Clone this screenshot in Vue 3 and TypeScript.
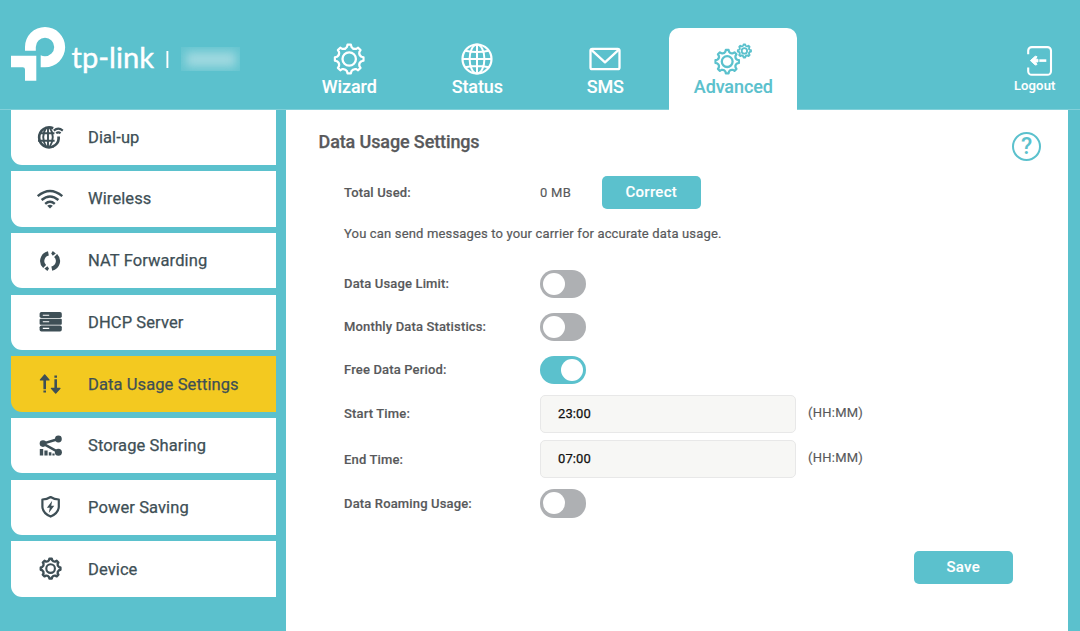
<script setup lang="ts">
import { ref } from 'vue'

interface NavTab { id: string; label: string }
interface MenuItem { id: string; label: string }

const tabs: NavTab[] = [
  { id: 'wizard', label: 'Wizard' },
  { id: 'status', label: 'Status' },
  { id: 'sms', label: 'SMS' },
  { id: 'advanced', label: 'Advanced' },
]
const activeTab = ref('advanced')

const menu: MenuItem[] = [
  { id: 'dial', label: 'Dial-up' },
  { id: 'wireless', label: 'Wireless' },
  { id: 'nat', label: 'NAT Forwarding' },
  { id: 'dhcp', label: 'DHCP Server' },
  { id: 'usage', label: 'Data Usage Settings' },
  { id: 'storage', label: 'Storage Sharing' },
  { id: 'power', label: 'Power Saving' },
  { id: 'device', label: 'Device' },
]
const activeItem = ref('usage')

const limit = ref(false)
const monthly = ref(false)
const freePeriod = ref(true)
const roaming = ref(false)
const startTime = ref('23:00')
const endTime = ref('07:00')

// Outline of an eight-toothed gear with scooped valleys between the teeth.
function gear(cx: number, cy: number, outer: number, root: number): string {
  const at = (r: number, a: number) =>
    `${(cx + r * Math.sin(a)).toFixed(2)} ${(cy - r * Math.cos(a)).toFixed(2)}`
  const step = Math.PI / 4
  const shoulder = root + 0.35 * (outer - root)
  let d = ''
  for (let i = 0; i < 8; i++) {
    const a = i * step
    d += `${i ? 'L' : 'M'}${at(outer, a - 0.12)}L${at(outer, a + 0.12)}`
    d += `L${at(shoulder, a + 0.18)}`
    d += `Q${at(root - 0.35 * (outer - root), a + step / 2)} ${at(shoulder, a + step - 0.18)}`
  }
  return d + 'Z'
}
</script>

<template>
  <div class="page">
    <header class="header">
      <div class="brand">
        <svg class="logo" width="170" height="60" viewBox="0 0 170 60">
          <path fill="#fff" d="M14 25.7V22A20 20 0 0 1 34 2A20.15 20.15 0 0 1 34 42.3H29.7V30.2Q31.5 31.2 34 31.2A9.2 9.2 0 1 0 24.8 22V25.7ZM0 30.7H25.3V55.7H14V44.5Q14 42.3 11.8 42.3H0Z" />
          <text class="wordmark" x="60.5" y="42.6" textLength="82.5" lengthAdjust="spacingAndGlyphs">tp-link</text>
          <path d="M156.4 26V43" stroke="#fff" stroke-width="1.9" />
        </svg>
        <div class="model"><i></i></div>
      </div>
      <nav class="tabs">
        <a v-for="t in tabs" :key="t.id" class="tab" :class="{ active: t.id === activeTab }" @click="activeTab = t.id">
          <svg width="40" height="34" viewBox="0 0 40 34" fill="none" stroke="currentColor" stroke-linejoin="round">
            <template v-if="t.id === 'wizard'">
              <path :d="gear(20.2, 17, 14.4, 11.3)" stroke-width="2.2" />
              <circle cx="20.2" cy="17" r="6.7" stroke-width="2.3" />
            </template>
            <g v-else-if="t.id === 'status'" stroke-width="2">
              <circle cx="20" cy="17" r="14.5" stroke-width="2.2" />
              <ellipse cx="20" cy="17" rx="7.4" ry="14.6" />
              <path d="M20 2.4V31.6M5.4 17H34.6M8.3 8.8Q20 11.2 31.7 8.8M8.3 25.2Q20 22.8 31.7 25.2" />
            </g>
            <g v-else-if="t.id === 'sms'" stroke-width="2.3">
              <rect x="5.5" y="6.8" width="29" height="20.4" rx="1.8" />
              <path d="M6.4 7.8L20 20.3L33.6 7.8" />
            </g>
            <template v-else>
              <path :d="gear(14.2, 19.6, 11.8, 9.2)" stroke-width="2.2" />
              <circle cx="14.2" cy="19.6" r="5.4" stroke-width="2.3" />
              <path :d="gear(31.4, 8.9, 6.6, 5.1)" stroke-width="1.9" />
              <circle cx="31.4" cy="8.9" r="2.7" stroke-width="1.8" />
            </template>
          </svg>
          <span>{{ t.label }}</span>
        </a>
      </nav>
      <a class="logout">
        <svg width="26" height="30" viewBox="0 0 26 30" fill="none" stroke="#fff" stroke-width="2.1">
          <path d="M1.2 8.3V4.6A3.6 3.6 0 0 1 4.8 1.1H20.4A3.6 3.6 0 0 1 24 4.6V25.2A3.6 3.6 0 0 1 20.4 28.8H4.8A3.6 3.6 0 0 1 1.2 25.2V21.5" />
          <path d="M12.3 14.6H19.3" stroke-width="2.6" />
          <path d="M3.4 14.6L8.2 10.2L10 10.6L8.6 13.3H11V15.9H8.6L10 18.6L8.2 19Z" fill="#fff" stroke-width="0.9" stroke-linejoin="round" />
        </svg>
        <span>Logout</span>
      </a>
    </header>

    <div class="body">
      <aside class="sidebar">
        <a v-for="m in menu" :key="m.id" class="item" :class="{ active: m.id === activeItem }" @click="activeItem = m.id">
          <svg width="30" height="28" viewBox="0 0 30 28" fill="none" stroke="currentColor">
            <g v-if="m.id === 'dial'" stroke-width="1.9">
              <path d="M17.2 5.2A10 10 0 1 0 17.4 23.4" stroke-width="2.6" />
              <path d="M12 4.2V24M3 10.2H18.4M2 17.8H18.6M10.4 4.2Q4 14 10.4 24M13.6 4.2Q20 14 13.6 24" />
              <path d="M22.6 13.6V16Q22.2 21.2 16.8 23.4" stroke-width="2.7" />
              <path d="M17.8 7.6Q22.3 3.8 26.8 7.6M20.2 10.3Q22.4 8.5 24.6 10.3" stroke-width="2.1" />
            </g>
            <g v-else-if="m.id === 'wireless'" stroke-width="2.4">
              <path d="M1.7 11.2Q14 0.8 26.3 11.2M5.6 15Q14 7.8 22.4 15M9.2 18.8Q14 14.6 18.8 18.8" />
              <path d="M14 23.6L11.2 20.8Q14 18.8 16.8 20.8Z" fill="currentColor" stroke="none" />
            </g>
            <g v-else-if="m.id === 'nat'" stroke-width="4.2">
              <path d="M12.4 6.4A7.7 7.7 0 0 0 8.6 19.5" />
              <path d="M15.8 21.6A7.7 7.7 0 0 0 19.6 8.5" />
              <path d="M8.4 21.6L11.4 19.2L13 21.6L11.4 24ZM19.8 6.4L16.8 4L15.2 6.4L16.8 8.8Z" fill="currentColor" stroke="none" />
            </g>
            <g v-else-if="m.id === 'dhcp'" fill="currentColor" stroke="none">
              <rect x="3.6" y="4" width="22.2" height="6" rx="1.8" />
              <rect x="3.6" y="10.8" width="22.2" height="5.9" rx="1" />
              <rect x="3.6" y="17.5" width="22.2" height="6" rx="1.8" />
              <path d="M6.8 7.2H13.2M6.8 13.8H13.2M6.8 20.4H13.2" stroke="#fff" stroke-width="1.1" />
            </g>
            <g v-else-if="m.id === 'usage'" stroke-width="2.6">
              <path d="M8.7 8V19.2M8.7 20.4V22.6M19.7 9.2V20M19.7 5.5V7.7" />
              <path d="M4.4 10L8.7 4.8L13 10ZM15.4 18.4L19.7 23.2L24 18.4Z" fill="currentColor" stroke-width="1.2" stroke-linejoin="round" />
            </g>
            <g v-else-if="m.id === 'storage'" stroke-width="2.5">
              <path d="M22.4 7L7 11.6L22.4 20.2" />
              <g fill="currentColor" stroke="none">
                <circle cx="22.4" cy="7" r="3.4" /><circle cx="7" cy="11.6" r="3.3" /><circle cx="22.4" cy="20.2" r="3.5" />
                <path d="M3.8 17H7.2V23.6H3.8ZM8.4 18.5H11.6V23.6H8.4ZM12.8 20.2H15.4V23.6H12.8ZM16.4 21.4H18.6V23.6H16.4Z" />
              </g>
            </g>
            <g v-else-if="m.id === 'power'">
              <path d="M14.6 4Q18.3 6.3 22.8 6.5V14Q22.2 20.4 14.6 23.6Q7 20.4 6.4 14V6.5Q10.9 6.3 14.6 4Z" stroke-width="2.2" stroke-linejoin="round" />
              <path d="M16.2 7.8L10.9 14.7H13.8L12.8 20L18.3 12.7H15.2Z" fill="currentColor" stroke="none" />
            </g>
            <g v-else stroke-linejoin="round">
              <path :d="gear(14.6, 13.6, 9.9, 7.9)" stroke-width="2.4" />
              <circle cx="14.6" cy="13.6" r="4.3" stroke-width="2.1" />
            </g>
          </svg>
          <span>{{ m.label }}</span>
        </a>
      </aside>

      <main class="main">
        <div class="title-row">
          <h1>Data Usage Settings</h1>
          <button class="help" type="button">?</button>
        </div>
        <div class="row total">
          <label>Total Used:</label>
          <span class="amount">0 MB</span>
          <button class="btn" type="button">Correct</button>
        </div>
        <p class="note">You can send messages to your carrier for accurate data usage.</p>
        <div class="row switch">
          <label>Data Usage Limit:</label>
          <button class="toggle" :class="{ on: limit }" type="button" @click="limit = !limit"><i></i></button>
        </div>
        <div class="row switch">
          <label>Monthly Data Statistics:</label>
          <button class="toggle" :class="{ on: monthly }" type="button" @click="monthly = !monthly"><i></i></button>
        </div>
        <div class="row switch">
          <label>Free Data Period:</label>
          <button class="toggle" :class="{ on: freePeriod }" type="button" @click="freePeriod = !freePeriod"><i></i></button>
        </div>
        <div class="row time start">
          <label>Start Time:</label>
          <input v-model="startTime" type="text" />
          <span class="hint">(HH:MM)</span>
        </div>
        <div class="row time">
          <label>End Time:</label>
          <input v-model="endTime" type="text" />
          <span class="hint">(HH:MM)</span>
        </div>
        <div class="row roaming">
          <label>Data Roaming Usage:</label>
          <button class="toggle" :class="{ on: roaming }" type="button" @click="roaming = !roaming"><i></i></button>
        </div>
        <div class="actions"><button class="btn" type="button">Save</button></div>
      </main>
    </div>
  </div>
</template>

<style>
html, body { margin: 0; background: #5bc1cd; overflow: hidden; }
</style>

<style scoped>
.page { width: 1080px; height: 631px; display: flex; flex-direction: column; background: #5bc1cd; font-family: Roboto, "Liberation Sans", sans-serif; color: #58595b; }
.page *, .page { box-sizing: border-box; }
button, input { font-family: inherit; border: 0; padding: 0; }
.header { height: 110px; flex: none; display: flex; border-bottom: 1px solid #82d0d9; }
.brand { width: 285px; flex: none; display: flex; padding: 25px 0 0 11px; }
.logo { flex: none; }
.wordmark { font: 400 29px Lato, sans-serif; fill: #fff; stroke: #fff; stroke-width: 0.4px; }
.model { width: 59px; height: 24px; margin-top: 22px; overflow: hidden; display: flex; align-items: center; justify-content: center; background: #65c5d0; }
.model i { width: 50px; height: 15px; background: #a0d9e0; filter: blur(5px); }
.tabs { display: flex; padding-top: 28px; }
.tab { width: 128px; height: 82px; padding-top: 14px; display: flex; flex-direction: column; align-items: center; color: #fff; font-size: 18px; font-weight: 500; line-height: 22px; letter-spacing: -0.1px; -webkit-text-stroke: 0.1px currentColor; }
.tab svg { flex: none; }
.tab.active { background: #fff; color: #5bc1cd; border-radius: 10px 10px 0 0; }
.tab span { padding-left: 0.6px; }
.logout { margin-left: auto; margin-right: 24.5px; padding-top: 46px; display: flex; flex-direction: column; align-items: center; color: #fff; font-size: 13px; font-weight: 500; letter-spacing: 0.15px; line-height: 20px; -webkit-text-stroke: 0.1px currentColor; }
.logout svg { margin-left: 10px; }
.body { flex: 1; display: flex; min-height: 0; }
.sidebar { width: 264.5px; margin: -0.5px 10px 0 11px; display: flex; flex-direction: column; gap: 6.2px; flex: none; }
.item { height: 55.5px; flex: none; display: flex; align-items: center; padding-left: 25px; background: #fff; border-bottom-left-radius: 11px; color: #3e4f56; font-size: 16.5px; letter-spacing: 0.1px; }
.item svg { margin-right: 22px; }
.item span { -webkit-text-stroke: 0.25px currentColor; }
.item.active { background: #f3c920; }
.main { width: 782.5px; background: #fff; padding: 0 55px 0 58.5px; }
.title-row { height: 64px; display: flex; align-items: center; justify-content: space-between; margin-left: -25.5px; margin-right: -28px; }
h1 { margin: 0 0 2px; font-size: 18px; font-weight: 500; letter-spacing: -0.12px; -webkit-text-stroke: 0.25px currentColor; }
.help { width: 29px; height: 29px; margin-top: 8px; border: 2.2px solid #5bc1cd; border-radius: 50%; background: #fff; color: #5bc1cd; font-size: 23px; font-weight: 500; line-height: 25px; text-align: center; }
.row { height: 43px; display: flex; align-items: center; font-size: 13px; letter-spacing: 0.15px; }
.row label { width: 196px; flex: none; font-weight: 500; -webkit-text-stroke: 0.15px currentColor; }
.row.switch label { margin-top: -2px; }
.row.total { height: 37px; }
.amount { width: 61.5px; letter-spacing: 0.25px; -webkit-text-stroke: 0.15px currentColor; }
.btn { width: 99.5px; height: 33px; padding-bottom: 1px; border-radius: 5px; background: #5bc1cd; color: #fff; font-size: 15px; font-weight: 500; letter-spacing: 0.3px; -webkit-text-stroke: 0.1px currentColor; }
.total .btn { padding-bottom: 2px; }
.note { margin: 0 0 5.5px; height: 46px; line-height: 46px; font-size: 13px; letter-spacing: 0.16px; -webkit-text-stroke: 0.2px currentColor; }
.toggle { width: 46px; height: 28px; padding: 3px; display: flex; justify-content: flex-start; border-radius: 14px; background: #aeb0b3; }
.toggle i { width: 22px; height: 22px; border-radius: 50%; background: #fff; }
.toggle.on { justify-content: flex-end; background: #5bc1cd; }
.row.time { height: 45px; }
.row.start label { margin-top: -2px; }
.row input { width: 256px; height: 38px; padding: 0 0 1px 17px; border: 1px solid #e8e8e8; border-radius: 5px; background: #f7f7f5; color: #111; font-size: 13px; letter-spacing: 0.1px; -webkit-text-stroke: 0.25px currentColor; }
.hint { margin-left: 12px; margin-top: -3px; letter-spacing: 0.25px; -webkit-text-stroke: 0.15px currentColor; }
.row.roaming { height: 44px; }
.roaming .toggle { height: 29px; }
.actions { display: flex; justify-content: flex-end; padding-top: 25.5px; }
</style>
